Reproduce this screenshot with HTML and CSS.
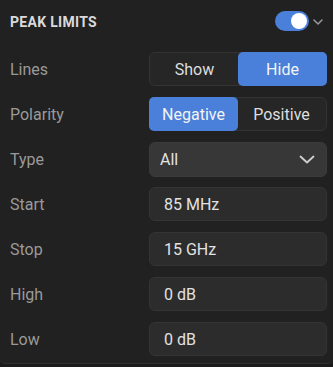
FILE: index.html
```html
<!DOCTYPE html>
<html>
<head>
<meta charset="utf-8">
<link rel="stylesheet" href="styles.css">
</head>
<body>
<div class="panel">
  <div class="header">
    <span class="title">PEAK LIMITS</span>
    <div class="header-controls">
      <span class="toggle"><span class="knob"></span></span>
      <svg class="hchev" width="10" height="6" viewBox="0 0 10 6"><path d="M1 1 L5 5 L9 1" fill="none" stroke="#9a9a9a" stroke-width="1.5" stroke-linecap="round" stroke-linejoin="round"/></svg>
    </div>
  </div>
  <div class="rows">
    <div class="row">
      <span class="label">Lines</span>
      <div class="seg">
        <span class="seg-btn">Show</span>
        <span class="seg-btn active">Hide</span>
      </div>
    </div>
    <div class="row">
      <span class="label">Polarity</span>
      <div class="seg">
        <span class="seg-btn active">Negative</span>
        <span class="seg-btn">Positive</span>
      </div>
    </div>
    <div class="row">
      <span class="label">Type</span>
      <div class="select">
        <span>All</span>
        <svg width="16" height="9" viewBox="0 0 16 9"><path d="M1.5 1.5 L8 7.5 L14.5 1.5" fill="none" stroke="#cfcfcf" stroke-width="1.8" stroke-linecap="round" stroke-linejoin="round"/></svg>
      </div>
    </div>
    <div class="row">
      <span class="label">Start</span>
      <div class="input">85 MHz</div>
    </div>
    <div class="row">
      <span class="label">Stop</span>
      <div class="input">15 GHz</div>
    </div>
    <div class="row">
      <span class="label">High</span>
      <div class="input">0 dB</div>
    </div>
    <div class="row">
      <span class="label">Low</span>
      <div class="input">0 dB</div>
    </div>
  </div>
</div>
</body>
</html>
```

FILE: styles.css
```css
html, body {
  margin: 0;
  padding: 0;
  background: #1b1b1b;
  font-family: Roboto, "Liberation Sans", sans-serif;
}
.panel {
  width: 333px;
  height: 364px;
  box-sizing: border-box;
  background: #212121;
  border-bottom: 1px solid #2f2f2f;
  border-radius: 0 0 5px 5px;
}
.header {
  height: 42px;
  display: flex;
  align-items: center;
  justify-content: space-between;
  padding: 0 10px 0 10px;
}
.title {
  font-size: 14px;
  font-weight: 700;
  color: #dadada;
  letter-spacing: 0.3px;
  padding-top: 1px;
}
.header-controls {
  display: flex;
  align-items: center;
  gap: 4px;
}
.toggle {
  width: 34px;
  height: 20px;
  border-radius: 10px;
  background: #4a80d9;
  display: flex;
  align-items: center;
  justify-content: flex-end;
  padding-right: 2px;
  box-sizing: border-box;
}
.knob {
  width: 16px;
  height: 16px;
  border-radius: 50%;
  background: #ffffff;
}
.hchev {
  display: block;
  margin-top: 1px;
}
.rows {
  display: flex;
  flex-direction: column;
  gap: 11px;
  padding: 10px 6px 0 10px;
}
.row {
  height: 34px;
  display: flex;
  align-items: center;
  justify-content: space-between;
}
.label {
  font-size: 16px;
  color: #9a9a9a;
}
.seg {
  width: 178px;
  height: 34px;
  box-sizing: border-box;
  display: flex;
  border: 1px solid #333333;
  border-radius: 6px;
  background: #262626;
}
.seg-btn {
  flex: 1;
  display: flex;
  align-items: center;
  justify-content: center;
  font-size: 16px;
  color: #dedede;
  border-radius: 5px;
}
.seg-btn.active {
  background: #4a80d9;
  color: #f4f4f4;
  margin: -1px;
}
.select {
  width: 178px;
  height: 35px;
  box-sizing: border-box;
  display: flex;
  align-items: center;
  justify-content: space-between;
  padding: 0 11px 0 10px;
  background: #373737;
  border: 1px solid #3b3b3b;
  border-radius: 6px;
  font-size: 16px;
  color: #e2e2e2;
}
.select svg {
  display: block;
}
.input {
  width: 178px;
  height: 34px;
  box-sizing: border-box;
  display: flex;
  align-items: center;
  padding: 0 14px;
  background: #2c2c2c;
  border: 1px solid #343434;
  border-radius: 6px;
  font-size: 16px;
  color: #e2e2e2;
}
```
